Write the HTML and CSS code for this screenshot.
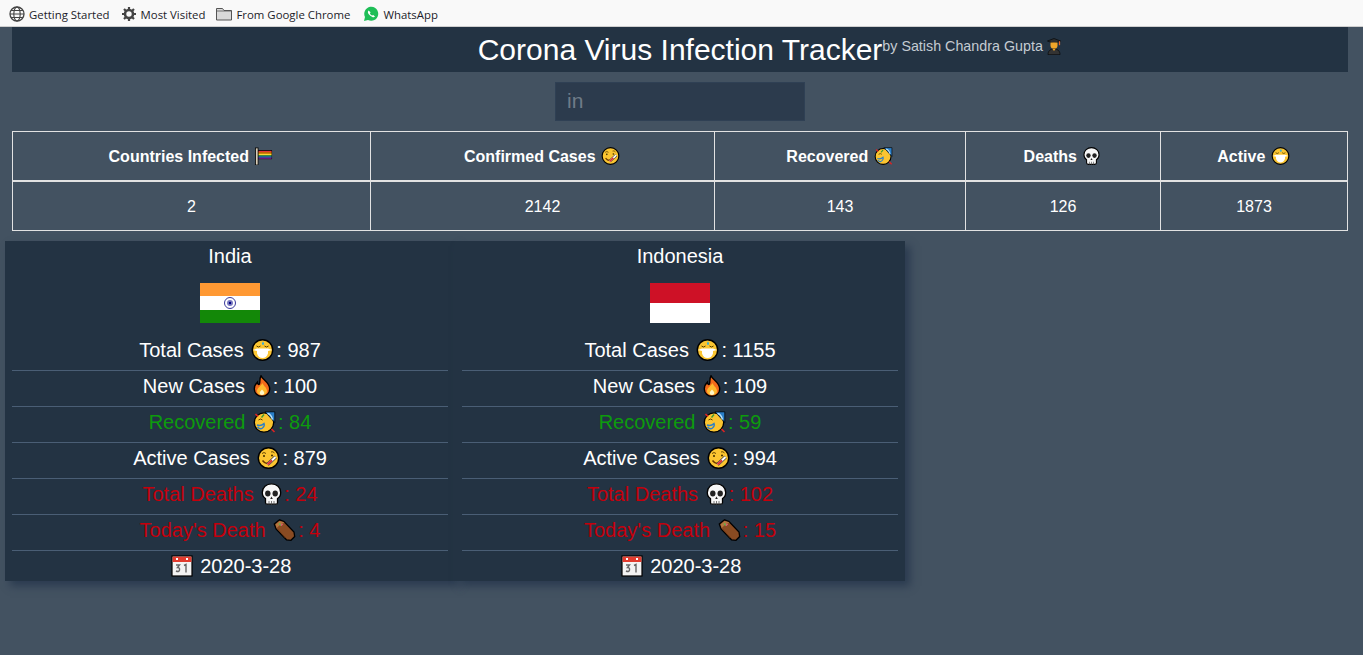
FILE: index.html
```html
<!DOCTYPE html>
<html lang="en">
<head>
<meta charset="utf-8">
<title>Corona Virus Infection Tracker</title>
<link rel="stylesheet" href="styles.css">
</head>
<body>
<svg class="defs" aria-hidden="true">
  <symbol id="e-mask" viewBox="0 0 22 22">
    <circle cx="11" cy="11" r="10.200" fill="#fbc531" stroke="#000" stroke-width="1.400"/>
    <path d="M1.500 11l4-1.500h11l4 1.500-4 1v2.500q-1.500 4.500-5.500 4.500t-5.500-4.500V12z" fill="#fff"/>
    <path d="M5 7q2 2 4 0M13 7q2 2 4 0" fill="none" stroke="#5b4300" stroke-width="1"/>
    <path d="M11.500 2.500q-2 2.500 0 3.500q2-1 0-3.500z" fill="#29a9e0"/>
  </symbol>
  <symbol id="e-fire" viewBox="0 0 18 22">
    <path d="M8 .8c1.500 4 8.700 6.500 8.700 13.200c0 4.200-3.500 7.200-7.700 7.200s-7.700-3-7.700-7.200c0-3.500 1.700-5.500 3.200-7c0 2 .8 3 1.800 2.300C7.500 7 6 4 8 .8z" fill="#f26a1b" stroke="#000" stroke-width="1.400"/>
    <path d="M9.500 8c.5 2.500 4.500 4.500 4.500 8c0 2.700-2.300 4-5 4s-5-1.300-5-4c0-3 3.500-4.500 5.500-8z" fill="#fdb92e"/>
    <path d="M9 14.500c1 1.500 2.300 2.300 2.300 3.500S10.200 20 9 20s-2.300-.8-2.300-2 1.300-2 2.300-3.500z" fill="#fff6c8"/>
  </symbol>
  <symbol id="e-party" viewBox="0 0 22 22">
    <circle cx="10.500" cy="11.500" r="9.700" fill="#fbc531" stroke="#000" stroke-width="1.300"/>
    <path d="M11.500.8h9.800v10.700z" fill="#2a7fc9" stroke="#000" stroke-width=".8"/>
    <path d="M14 2.500q3.500.5 5 6" fill="none" stroke="#bfe3f8" stroke-width="1.300"/>
    <path d="M3.500 14q4 1.500 7-1.500q1 2.500-1.500 4.500t-5-1" fill="none" stroke="#2a7fc9" stroke-width="1.400"/>
    <path d="M5 9q2-2 4 0" fill="none" stroke="#5b4300" stroke-width="1"/>
    <path d="M8 6.500l2.500-3" stroke="#3a9b35" stroke-width="1.400"/>
    <path d="M18 18l3 3M2 3l2.500 2.500" stroke="#d22" stroke-width="1.600"/>
  </symbol>
  <symbol id="e-thermo" viewBox="0 0 22 22">
    <circle cx="11" cy="11" r="10.200" fill="#fbc531" stroke="#000" stroke-width="1.400"/>
    <path d="M4.500 6.500q2-2 4 0M13.500 5q2-1 3.500 1" fill="none" stroke="#6b4a00" stroke-width="1"/>
    <circle cx="6.500" cy="9" r="1" fill="#3c2a00"/>
    <circle cx="14.500" cy="8.500" r="1" fill="#3c2a00"/>
    <path d="M5 13.500q3 4 6.500 2.500" fill="none" stroke="#6b3a00" stroke-width="1.500"/>
    <path d="M10 17.500l8-7.500" stroke="#333" stroke-width="3.400"/>
    <path d="M10 17.500l8-7.500" stroke="#fff" stroke-width="2.200"/>
    <path d="M10 17.500l4.500-4.200" stroke="#d33" stroke-width="2.200"/>
  </symbol>
  <symbol id="e-skull" viewBox="0 0 20 22">
    <path d="M10 .8c5.200 0 9.200 3.700 9.200 8.700c0 3-1.500 5-3.200 6v4.200c0 1-1 1.500-2 1.500H6c-1 0-2-.5-2-1.500v-4.200C2.300 14.500.8 12.500.8 9.500.8 4.500 4.800.8 10 .8z" fill="#f7f7f7" stroke="#000" stroke-width="1.300"/>
    <ellipse cx="6.300" cy="10.500" rx="2.700" ry="3" fill="#222"/>
    <ellipse cx="13.700" cy="10.500" rx="2.700" ry="3" fill="#222"/>
    <path d="M10 13.500l1.300 2.500H8.700z" fill="#222"/>
    <path d="M7.500 18v3.500M10 18v3.500M12.500 18v3.500" stroke="#555" stroke-width=".8"/>
  </symbol>
  <symbol id="e-coffin" viewBox="0 0 22 22">
    <path d="M6 .8L.8 5l1.700 5L13 20.800l4.500.5 3.700-3.800-.7-4.500L10.500 2.500z" fill="#8a4b22" stroke="#000" stroke-width="1.300"/>
    <path d="M6 2L2 5.500l1.200 3.500 3.800-3.500 4-2z" fill="#b5763f"/>
    <path d="M5.500 4.500l2 2" stroke="#5fb04c" stroke-width="1.500"/>
    <path d="M7.500 6.500l1.500-1.500" stroke="#e85a7a" stroke-width="1.500"/>
    <path d="M4 10l8 9" stroke="#6e3815" stroke-width="1"/>
  </symbol>
  <symbol id="e-cal" viewBox="0 0 22 22">
    <rect x="1" y="1" width="20" height="20" fill="#f3f3f3" stroke="#000" stroke-width="1.200"/>
    <rect x="1.600" y="1.600" width="18.800" height="5.400" fill="#e23b2e"/>
    <rect x="5" y="3" width="2" height="2" fill="#fff"/>
    <rect x="15" y="3" width="2" height="2" fill="#fff"/>
    <path d="M5 10h3.500l-2 2.500q2.500 0 2 2.500t-3.500 1M13 10.500l2-1v8" fill="none" stroke="#666" stroke-width="1.400"/>
  </symbol>
  <symbol id="e-flag" viewBox="0 0 20 20">
    <rect x="1" y="1" width="3" height="19" fill="#d9cdb8" stroke="#000" stroke-width=".9"/>
    <path d="M4 3.500h15.500v10H4z" fill="#000"/>
    <path d="M4.500 4.300h14.500v1.600H4.500z" fill="#e53935"/>
    <path d="M4.500 5.900h14.500v1.600H4.500z" fill="#fb8c00"/>
    <path d="M4.500 7.500h14.500v1.600H4.500z" fill="#fdd835"/>
    <path d="M4.500 9.100h14.500v1.400H4.500z" fill="#43a047"/>
    <path d="M4.500 10.500h14.500v1.300H4.500z" fill="#1e88e5"/>
    <path d="M4.500 11.800h14.500v1.200H4.500z" fill="#8e24aa"/>
  </symbol>
  <symbol id="e-student" viewBox="0 0 14 17">
    <path d="M7 .5L13.500 3 7 5.500.5 3z" fill="#2f2f2f" stroke="#000" stroke-width=".6"/>
    <path d="M12.500 3.200v4" stroke="#e8642a" stroke-width="1.200"/>
    <path d="M3.500 4.500h7v3.500q-.5 3-3.500 3t-3.500-3z" fill="#f0a62a"/>
    <path d="M1 16.700c0-3.500 2-5.700 6-5.700s6 2.200 6 5.700z" fill="#333" stroke="#000" stroke-width=".6"/>
    <path d="M5.500 11h3l-1.500 2z" fill="#f0a62a"/>
  </symbol>
</svg>

<nav class="bookmarks">
  <span class="bookmark">
    <svg class="bm-icon" viewBox="0 0 16 16"><circle cx="8" cy="8" r="7" fill="none" stroke="#444" stroke-width="1.300"/><ellipse cx="8" cy="8" rx="3.200" ry="7" fill="none" stroke="#444" stroke-width="1.100"/><path d="M1 8h14M2 4.500h12M2 11.500h12" stroke="#444" stroke-width="1.100"/></svg>
    Getting Started
  </span>
  <span class="bookmark">
    <svg class="bm-icon" viewBox="0 0 16 16"><circle cx="8" cy="8" r="4" fill="none" stroke="#444" stroke-width="2.600"/><path d="M8 1v3M8 12v3M1 8h3M12 8h3M3 3l2 2M11 11l2 2M13 3l-2 2M5 11l-2 2" stroke="#444" stroke-width="2.200"/></svg>
    Most Visited
  </span>
  <span class="bookmark">
    <svg class="bm-icon" viewBox="0 0 16 16"><path d="M.5 14V2.500h6l1.500 2h7.500V14z" fill="#d9d9d9" stroke="#555"/><path d="M.5 5h15" stroke="#555" stroke-width=".8"/></svg>
    From Google Chrome
  </span>
  <span class="bookmark bookmark-last">
    <svg class="bm-icon" viewBox="0 0 16 16"><path d="M1 15l1-4a7 7 0 1 1 3 3z" fill="#1ebe57"/><path d="M5.500 4.500c-1 1-1 3 1.500 5s4 2.300 5 1l-1.800-1.500-1 .6c-1-.4-2-1.500-2.300-2.400l.7-.9z" fill="#fff"/></svg>
    WhatsApp
  </span>
</nav>

<main class="page">
  <header class="title-bar">
    <h1 class="title">Corona Virus Infection Tracker</h1>
    <p class="byline">by Satish Chandra Gupta <svg class="emoji-student"><use href="#e-student"/></svg></p>
  </header>

  <div class="search-row">
    <input class="search" type="text" value="in" aria-label="Search country">
  </div>

  <table class="summary">
    <colgroup>
      <col class="c1"><col class="c2"><col class="c3"><col class="c4"><col class="c5">
    </colgroup>
    <thead>
      <tr>
        <th>Countries Infected <svg class="e-sm"><use href="#e-flag"/></svg></th>
        <th>Confirmed Cases <svg class="e-sm"><use href="#e-thermo"/></svg></th>
        <th>Recovered <svg class="e-sm"><use href="#e-party"/></svg></th>
        <th>Deaths <svg class="e-sm"><use href="#e-skull"/></svg></th>
        <th>Active <svg class="e-sm"><use href="#e-mask"/></svg></th>
      </tr>
    </thead>
    <tbody>
      <tr><td>2</td><td>2142</td><td>143</td><td>126</td><td>1873</td></tr>
    </tbody>
  </table>

  <section class="cards">
    <article class="card">
      <h2 class="country">India</h2>
      <svg class="flag" viewBox="0 0 60 40">
        <rect width="60" height="13" fill="#ff9933"/><rect y="13" width="60" height="14" fill="#fff"/><rect y="27" width="60" height="13" fill="#138808"/>
        <circle cx="30" cy="20" r="5.500" fill="#fff" stroke="#3a3a9a" stroke-width="1"/><circle cx="30" cy="20" r="3" fill="#7a7ac0"/><circle cx="30" cy="20" r="1.200" fill="#000080"/>
      </svg>
      <ul class="stats">
        <li>Total Cases <svg class="e"><use href="#e-mask"/></svg>: 987</li>
        <li>New Cases <svg class="e e-fire"><use href="#e-fire"/></svg>: 100</li>
        <li class="good">Recovered <svg class="e"><use href="#e-party"/></svg>: 84</li>
        <li>Active Cases <svg class="e"><use href="#e-thermo"/></svg>: 879</li>
        <li class="bad">Total Deaths <svg class="e e-skull"><use href="#e-skull"/></svg>: 24</li>
        <li class="bad">Today's Death <svg class="e"><use href="#e-coffin"/></svg>: 4</li>
        <li><svg class="e e-cal"><use href="#e-cal"/></svg> 2020-3-28</li>
      </ul>
    </article>
    <article class="card">
      <h2 class="country">Indonesia</h2>
      <svg class="flag" viewBox="0 0 60 40">
        <rect width="60" height="20" fill="#ce1126"/><rect y="20" width="60" height="20" fill="#fff"/>
      </svg>
      <ul class="stats">
        <li>Total Cases <svg class="e"><use href="#e-mask"/></svg>: 1155</li>
        <li>New Cases <svg class="e e-fire"><use href="#e-fire"/></svg>: 109</li>
        <li class="good">Recovered <svg class="e"><use href="#e-party"/></svg>: 59</li>
        <li>Active Cases <svg class="e"><use href="#e-thermo"/></svg>: 994</li>
        <li class="bad">Total Deaths <svg class="e e-skull"><use href="#e-skull"/></svg>: 102</li>
        <li class="bad">Today's Death <svg class="e"><use href="#e-coffin"/></svg>: 15</li>
        <li><svg class="e e-cal"><use href="#e-cal"/></svg> 2020-3-28</li>
      </ul>
    </article>
  </section>
</main>
</body>
</html>
```

FILE: styles.css
```css
* { box-sizing: border-box; }

html, body { height: 100%; }

body {
  margin: 0;
  background: #435261;
  color: #fff;
  font-family: "Liberation Sans", Arial, sans-serif;
  overflow: hidden;
}

.defs { display: none; }

.bookmarks {
  display: flex;
  align-items: center;
  height: 27px;
  padding: 2px 0 0 9px;
  gap: 11px;
  background: #f9f9f9;
  border-bottom: 1px solid #cfcfcf;
  color: #1c1c2a;
  font-family: "Open Sans", "Noto Sans", sans-serif;
  font-size: 11.4px;
}

.bookmark {
  display: flex;
  align-items: center;
  gap: 4px;
  white-space: nowrap;
}

.bookmark-last { margin-left: 2px; }

.bm-icon { width: 16px; height: 16px; }

.page { padding: 0 15px 0 12px; }

.title-bar {
  display: grid;
  grid-template-columns: 1fr auto 1fr;
  height: 45px;
  background: #233343;
}

.title {
  grid-column: 2;
  margin: 5px 0 0;
  font-size: 30px;
  font-weight: 400;
  line-height: 36px;
}

.byline {
  grid-column: 3;
  margin: 10px 0 0;
  color: #c4cbd2;
  font-size: 14.3px;
  line-height: 18px;
}

.emoji-student { width: 14px; height: 17px; vertical-align: -4px; }

.search-row {
  display: flex;
  justify-content: center;
  margin: 10px 0;
}

.search {
  width: 250px;
  height: 39px;
  padding: 0 11px 1px;
  border: 1px solid #2f4054;
  background: #2c3b4d;
  color: #6f7b88;
  font: 21px "Liberation Sans", Arial, sans-serif;
  outline: none;
}

.summary {
  width: 1335px;
  table-layout: fixed;
  border-collapse: collapse;
  font-size: 16px;
}

.c1 { width: 358px; }
.c2 { width: 344px; }
.c3 { width: 251px; }
.c4 { width: 195px; }
.c5 { width: 187px; }

.summary th,
.summary td {
  padding: 2px 0 0;
  border: 1px solid #e2e2e2;
  text-align: center;
  vertical-align: middle;
}

.summary th {
  height: 49px;
  border-bottom-width: 2px;
}

.summary td { height: 50px; }

.e-sm { width: 21px; height: 18px; vertical-align: -3px; }

.cards {
  display: flex;
  margin: 10px 0 0 -7px;
}

.card {
  width: 450px;
  height: 340px;
  padding: 0 7px;
  background: #233343;
  box-shadow: 5px 5px 8px #2b3b50;
  text-align: center;
}

.country {
  margin: 0;
  padding-top: 4px;
  font-size: 20px;
  font-weight: 400;
  line-height: 23px;
}

.flag {
  display: block;
  width: 60px;
  height: 40px;
  margin: 15px auto 12px;
}

.stats {
  margin: 0;
  padding: 0;
  list-style: none;
  font-size: 20px;
}

.stats li {
  height: 36px;
  line-height: 31px;
  border-bottom: 1px solid #4a5e75;
}

.stats li:last-child { border-bottom: 0; }

.e { width: 27px; height: 22px; vertical-align: -4px; }
.e-fire { width: 22px; }
.e-skull { width: 25px; }
.e-cal { width: 26px; }

.good { color: #0d9b0d; }
.bad { color: #c4000c; }
```
